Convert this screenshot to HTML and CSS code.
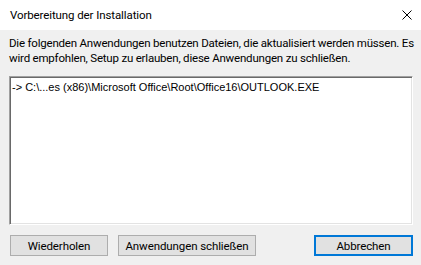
FILE: index.html
```html
<!DOCTYPE html>
<html lang="de">
<head>
    <meta charset="UTF-8">
    <title>Vorbereitung der Installation</title>
    <link rel="stylesheet" href="styles.css">
</head>
<body>
    <div class="dialog">
        <header class="titlebar">
            <span class="title">Vorbereitung der Installation</span>
            <button class="close" aria-label="Schließen">
                <svg width="10" height="10" viewBox="0 0 10 10">
                    <path d="M0.5 0.5 L9.5 9.5 M9.5 0.5 L0.5 9.5" stroke="#000" stroke-width="1" fill="none"/>
                </svg>
            </button>
        </header>

        <section class="content">
            <p class="message">Die folgenden Anwendungen benutzen Dateien, die aktualisiert werden müssen. Es<br>wird empfohlen, Setup zu erlauben, diese Anwendungen zu schließen.</p>

            <!-- Liste der laufenden Programme -->
            <div class="listbox">
                <div class="list-item">-&gt; C:\...es (x86)\Microsoft Office\Root\Office16\OUTLOOK.EXE</div>
            </div>

            <div class="buttons">
                <button class="btn btn-retry">Wiederholen</button>
                <button class="btn btn-close-apps">Anwendungen schließen</button>
                <button class="btn btn-cancel">Abbrechen</button>
            </div>
        </section>
    </div>
</body>
</html>
```

FILE: styles.css
```css
/* Base */
body {
    margin: 0;
    font-family: Roboto, 'Liberation Sans', sans-serif;
    font-size: 11.5px;
    color: #000;
    background-color: #f0f0f0;
}

.dialog {
    width: 421px;
    height: 265px;
    background-color: #f0f0f0;
    overflow: hidden;
}

/* Title bar */
.titlebar {
    height: 30px;
    background-color: #fff;
    display: flex;
    align-items: center;
    justify-content: space-between;
    padding-left: 10px;
    padding-right: 9px;
}

.title {
    font-size: 11.5px;
    letter-spacing: -0.1px;
}

.close {
    width: 10px;
    height: 30px;
    border: none;
    background: transparent;
    padding: 0;
    display: flex;
    align-items: center;
    justify-content: center;
}

/* Content */
.content {
    padding: 6px 8px 0 9px;
}

.message {
    margin: 0;
    line-height: 15px;
    white-space: nowrap;
    letter-spacing: -0.2px;
}

.listbox {
    margin-top: 10px;
    height: 149px;
    box-sizing: border-box;
    background-color: #fff;
    border-top: 1px solid #a0a0a0;
    border-left: 1px solid #a0a0a0;
    border-bottom: 1px solid #fff;
    border-right: 1px solid #fff;
    box-shadow: inset 1px 1px 0 #696969, inset -1px -1px 0 #e3e3e3;
    padding: 3px 2px;
}

.list-item {
    font-family: 'Liberation Sans', Arial, sans-serif;
    font-size: 11px;
    line-height: 14px;
}

/* Buttons */
.buttons {
    display: flex;
    margin-top: 10px;
}

.btn {
    height: 21px;
    font-family: Roboto, 'Liberation Sans', sans-serif;
    font-size: 11.5px;
    letter-spacing: -0.1px;
    color: #000;
    background-color: #e1e1e1;
    border: 1px solid #adadad;
    padding: 0;
    box-sizing: border-box;
}

.btn-retry {
    width: 98px;
    margin-left: 1px;
}

.btn-close-apps {
    width: 138px;
    margin-left: 10px;
}

.btn-cancel {
    width: 99px;
    margin-left: auto;
    border: 2px solid #0078d7;
}
```
